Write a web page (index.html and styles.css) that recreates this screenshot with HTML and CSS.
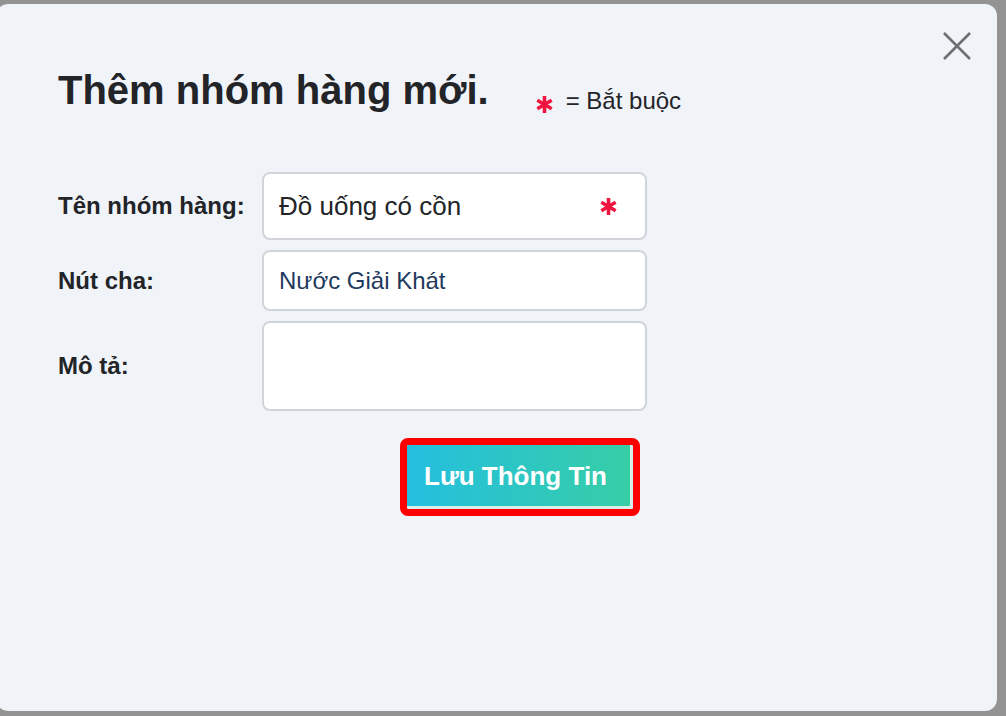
FILE: index.html
```html
<!DOCTYPE html>
<html>
<head>
    <title>Thêm nhóm hàng</title>
    <link rel="stylesheet" href="styles.css">
</head>
<body>
<div class="modal">
    <button class="close-btn" aria-label="Đóng">
        <svg width="30" height="30" viewBox="0 0 30 30">
            <path d="M2 2 L28 28 M28 2 L2 28" stroke="#6f6f6f" stroke-width="2.6" fill="none"/>
        </svg>
    </button>

    <div class="modal-header">
        <h1>Thêm nhóm hàng mới.</h1>
        <div class="legend">
            <svg class="star" width="17" height="19" viewBox="0 0 16 18">
                <path d="M8 1 V17 M1.2 5 L14.8 13 M14.8 5 L1.2 13" stroke="#f0143f" stroke-width="3.4" fill="none"/>
            </svg>
            <span>= Bắt buộc</span>
        </div>
    </div>

    <div class="form-grid">
        <label for="groupName">Tên nhóm hàng:</label>
        <div class="field">
            <input type="text" id="groupName" value="Đồ uống có cồn">
            <svg class="star" width="17" height="19" viewBox="0 0 16 18">
                <path d="M8 1 V17 M1.2 5 L14.8 13 M14.8 5 L1.2 13" stroke="#f0143f" stroke-width="3.4" fill="none"/>
            </svg>
        </div>

        <label for="parent">Nút cha:</label>
        <div class="field">
            <input type="text" id="parent" class="parent-input" value="Nước Giải Khát">
        </div>

        <label for="desc">Mô tả:</label>
        <div class="field field-tall">
            <textarea id="desc"></textarea>
        </div>

        <div class="actions">
            <button class="save-btn">Lưu Thông Tin</button>
        </div>
    </div>
</div>
</body>
</html>
```

FILE: styles.css
```css
body {
    font-family: "Liberation Sans", Arial, sans-serif;
    background-color: #939393;
    margin: 0;
    padding: 0;
    overflow: hidden;
}

.modal {
    position: relative;
    box-sizing: border-box;
    width: 1001px;
    height: 707px;
    margin: 4px 0 0 -4px;
    padding: 63px 0 0 62px;
    background-color: #f0f3f8;
    border-radius: 12px;
}

.close-btn {
    position: absolute;
    top: 27px;
    right: 25px;
    background: none;
    border: none;
    padding: 0;
    cursor: pointer;
}

.close-btn svg {
    display: block;
}

.modal-header {
    display: flex;
    align-items: flex-start;
    height: 46px;
}

h1 {
    margin: 0;
    font-size: 40px;
    line-height: 46px;
    font-weight: bold;
    color: #222428;
}

.legend {
    display: flex;
    align-items: flex-start;
    margin: 20px 0 0 47px;
    font-size: 24px;
    line-height: 28px;
    color: #222428;
}

.legend .star {
    margin: 8px 13px 0 0;
}

.star {
    display: block;
    flex-shrink: 0;
}

.form-grid {
    display: grid;
    grid-template-columns: 204px 385px;
    grid-template-rows: 68px 61px 90px auto;
    row-gap: 10px;
    align-items: center;
    margin-top: 59px;
}

label {
    font-size: 24px;
    font-weight: bold;
    color: #222428;
}

.field {
    box-sizing: border-box;
    height: 100%;
    display: flex;
    align-items: center;
    background-color: #fff;
    border: 2px solid #d1d5db;
    border-radius: 8px;
    padding: 0 28px 0 15px;
}

.field input {
    flex: 1;
    min-width: 0;
    border: none;
    outline: none;
    padding: 0;
    background: transparent;
    font-family: "Liberation Sans", Arial, sans-serif;
    font-size: 26px;
    color: #222428;
}

.field .parent-input {
    font-size: 24px;
    color: #1f3a5e;
}

.field-tall {
    padding: 0;
}

.field textarea {
    width: 100%;
    height: 100%;
    box-sizing: border-box;
    border: none;
    outline: none;
    resize: none;
    background: transparent;
    border-radius: 8px;
    padding: 10px 15px;
    font-family: "Liberation Sans", Arial, sans-serif;
    font-size: 22px;
}

.actions {
    grid-column: 2;
    margin: 17px 0 0 138px;
}

.save-btn {
    display: block;
    box-sizing: border-box;
    width: 240px;
    height: 78px;
    border: 7px solid #ff0000;
    border-radius: 8px;
    background: linear-gradient(90deg, #24bfdf, #37cea6);
    background-clip: padding-box;
    box-shadow: inset -3px -3px 0 #d8efe9;
    color: #fff;
    font-family: "Liberation Sans", Arial, sans-serif;
    font-size: 26px;
    font-weight: bold;
    padding: 0 9px 2px 0;
    cursor: pointer;
}
```
